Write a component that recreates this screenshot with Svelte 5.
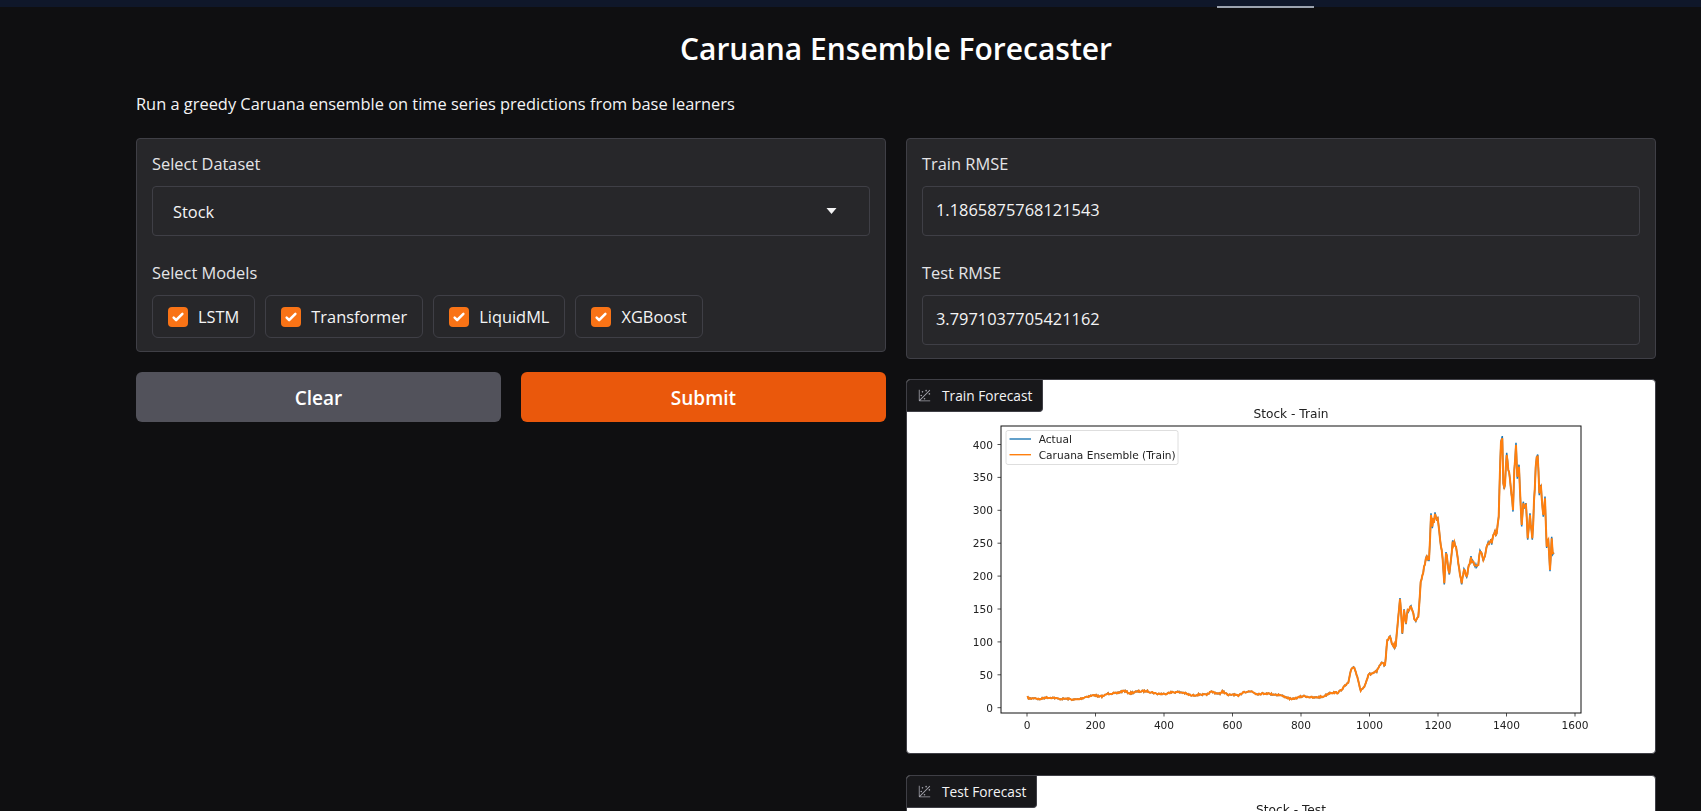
<script>
  let models = $state([
    { name: 'LSTM', on: true },
    { name: 'Transformer', on: true },
    { name: 'LiquidML', on: true },
    { name: 'XGBoost', on: true }
  ]);

  // plot geometry, in the same pixels as the picture of the plot
  const left = 1001, right = 1581, top = 426, bottom = 713;
  const xTicks = [0, 200, 400, 600, 800, 1000, 1200, 1400, 1600];
  const yTicks = [0, 50, 100, 150, 200, 250, 300, 350, 400];
  const xPos = (v) => 1027 + v * 0.3425;
  const yPos = (v) => 707.7 - v * 0.658;

  // traced series, flat part then the run up
  const flat = [[381,982],[390,986],[405,984],[418,988],[435,983],[460,983],[478,987],[500,986],[520,989],[540,987],[560,980],[585,975],[597,980],[610,978],[622,971],[650,970],[672,962],[688,970],[710,965],[740,963],[770,971],[795,972],[805,968],[830,966],[850,968],[875,977],[900,973],[920,975],[932,965],[960,972],[967,963],[985,976],[1000,973],[1015,978],[1030,966],[1055,964],[1070,972],[1100,970]];
  const rise = [[0,882],[30,885],[65,898],[100,888],[130,893],[160,890],[180,878],[205,878],[235,848],[243,810],[253,803],[262,830],[272,872],[285,855],[295,825],[320,815],[333,790],[345,795],[352,720],[360,710],[368,735],[377,738],[385,650],[390,597],[397,700],[402,630],[408,670],[413,630],[423,620],[435,660],[445,650],[452,545],[462,500],[470,470],[477,480],[483,345],[487,380],[495,342],[503,355],[508,395],[515,450],[523,550],[528,460],[538,520],[548,425],[558,440],[565,490],[575,550],[582,510],[590,528],[603,472],[613,495],[625,495],[630,455],[640,480],[652,435],[665,430],[670,405],[680,400],[686,350],[693,125],[697,115],[700,250],[705,255],[710,165],[715,210],[722,260],[729,330],[733,210],[738,135],[742,230],[747,200],[755,375],[760,310],[768,315],[773,415],[780,345],[787,415],[797,200],[803,170],[808,280],[813,260],[820,345],[825,295],[830,440],[835,420],[840,510],[845,415],[848,460],[852,458]];

  const traced = [
    ...flat.map(([x, y]) => [900 + x / 3, 370 + y / 3]),
    ...rise.map(([x, y]) => [1270 + x / 3, 400 + y / 3])
  ];

  // fill the gaps between traced points with daily noise, larger when the price is high
  let seed = 7;
  const rand = () => {
    seed = (seed * 16807) % 2147483647;
    return seed / 2147483647 - 0.5;
  };
  const series = [];
  traced.forEach((p, i) => {
    const next = traced[i + 1];
    series.push(p);
    if (!next) return;
    const steps = Math.floor((next[0] - p[0]) / 0.7);
    for (let s = 1; s < steps; s++) {
      const t = s / steps;
      const y = p[1] + (next[1] - p[1]) * t;
      const amp = 0.8 + (713 - y) * 0.035;
      series.push([p[0] + (next[0] - p[0]) * t, y + rand() * amp]);
    }
  });

  const toLine = (pts) => pts.map((p) => p[0].toFixed(1) + ',' + p[1].toFixed(1)).join(' ');

  // the actual values stick out a bit past the fit at every turn
  const actual = series.map((p, i) => {
    const a = series[i - 1], b = series[i + 1];
    if (!a || !b) return p;
    const out = (713 - p[1]) * 0.008;
    if (p[1] < a[1] && p[1] < b[1]) return [p[0], p[1] - out];
    if (p[1] > a[1] && p[1] > b[1]) return [p[0], p[1] + out];
    return p;
  });
</script>

{#snippet plotIcon()}
  <svg class="plot-icon" viewBox="0 0 32 32">
    <circle cx="20" cy="4" r="2" fill="currentColor"></circle>
    <circle cx="8" cy="16" r="2" fill="currentColor"></circle>
    <circle cx="28" cy="12" r="2" fill="currentColor"></circle>
    <circle cx="11" cy="7" r="2" fill="currentColor"></circle>
    <circle cx="16" cy="24" r="2" fill="currentColor"></circle>
    <path fill="currentColor" d="M30 3.413L28.586 2L4 26.585V2H2v26a2 2 0 0 0 2 2h26v-2H5.413Z"></path>
  </svg>
{/snippet}

{#snippet chart(title, legend, fit, real)}
  <svg class="chart" width="748" height="373" viewBox="907 380 748 373">
    <text class="chart-title" x="1291" y="418" text-anchor="middle">{title}</text>
    {#if real}
      <polyline points={toLine(real)} fill="none" stroke="#1f77b4" stroke-width="1.5"></polyline>
      <polyline points={toLine(fit)} fill="none" stroke="#ff7f0e" stroke-width="2"></polyline>
      <rect x={left} y={top} width={right - left} height={bottom - top} fill="none" stroke="#111" stroke-width="1"></rect>
      {#each xTicks as t}
        <line x1={xPos(t)} x2={xPos(t)} y1={bottom} y2={bottom + 3.5} stroke="#222" stroke-width="0.8"></line>
        <text class="tick" x={xPos(t)} y="729" text-anchor="middle">{t}</text>
      {/each}
      {#each yTicks as t}
        <line x1={left} x2={left - 3.5} y1={yPos(t)} y2={yPos(t)} stroke="#222" stroke-width="0.8"></line>
        <text class="tick" x="993" y={yPos(t) + 4} text-anchor="end">{t}</text>
      {/each}
      <rect x="1006" y="430.5" width="172" height="34" rx="2" fill="#fff" stroke="#d6d6d6" stroke-width="0.8"></rect>
      <line x1="1009.5" x2="1031" y1="439" y2="439" stroke="#1f77b4" stroke-width="1.4"></line>
      <line x1="1009.5" x2="1031" y1="454.7" y2="454.7" stroke="#ff7f0e" stroke-width="1.4"></line>
      <text class="tick" x="1038.7" y="442.6">Actual</text>
      <text class="tick" x="1038.7" y="458.6">{legend}</text>
    {/if}
  </svg>
{/snippet}

<div class="topbar"><span class="tab-line"></span></div>

<main class="page">
  <h1>Caruana Ensemble Forecaster</h1>
  <p class="intro">Run a greedy Caruana ensemble on time series predictions from base learners</p>

  <div class="columns">
    <div class="col">
      <div class="panel left-panel">
        <div class="field">
          <span class="label">Select Dataset</span>
          <div class="select">
            <span>Stock</span>
            <svg class="caret" viewBox="0 0 10 6"><path d="M0 0h10L5 6z" fill="#f4f4f5"></path></svg>
          </div>
        </div>
        <div class="field">
          <span class="label">Select Models</span>
          <div class="checks">
            {#each models as m}
              <label class="check">
                <input type="checkbox" bind:checked={m.on} />
                <span>{m.name}</span>
              </label>
            {/each}
          </div>
        </div>
      </div>
      <div class="actions">
        <button class="btn clear">Clear</button>
        <button class="btn submit">Submit</button>
      </div>
    </div>

    <div class="col">
      <div class="panel right-panel">
        <div class="field">
          <span class="label">Train RMSE</span>
          <div class="output">1.1865875768121543</div>
        </div>
        <div class="field">
          <span class="label">Test RMSE</span>
          <div class="output">3.7971037705421162</div>
        </div>
      </div>

      <div class="plot">
        <div class="plot-label">{@render plotIcon()}<span>Train Forecast</span></div>
        {@render chart('Stock - Train', 'Caruana Ensemble (Train)', series, actual)}
      </div>

      <div class="plot second">
        <div class="plot-label">{@render plotIcon()}<span>Test Forecast</span></div>
        {@render chart('Stock - Test', '', null, null)}
      </div>
    </div>
  </div>
</main>

<style>
  :global(body) {
    background: #0f0f11;
    color: #f4f4f5;
    font-family: "Open Sans", "Noto Sans", sans-serif;
    overflow: hidden;
  }

  .topbar {
    height: 7px;
    background: #0f172a;
    position: relative;
  }

  .tab-line {
    position: absolute;
    left: 1217px;
    top: 6px;
    width: 97px;
    height: 2px;
    background: #9ca3af;
  }

  .page {
    width: 1520px;
    margin-left: 136px;
  }

  h1 {
    margin: 0;
    padding-top: 20px;
    font-size: 30px;
    line-height: 44px;
    font-weight: 600;
    text-align: center;
    color: #fff;
  }

  .intro {
    margin: 0;
    padding-top: 21px;
    font-size: 16.4px;
    line-height: 24px;
    color: #f4f4f5;
  }

  .columns {
    display: grid;
    grid-template-columns: 750px 750px;
    gap: 20px;
    margin-top: 22px;
    align-items: start;
  }

  .col {
    display: flex;
    flex-direction: column;
    gap: 20px;
  }

  .panel {
    background: #27272a;
    border: 1px solid #3f3f46;
    border-radius: 4px;
    padding: 11px 15px 13px;
    display: flex;
    flex-direction: column;
    gap: 23px;
  }

  .field {
    display: flex;
    flex-direction: column;
    gap: 8px;
  }

  .label {
    font-size: 16.4px;
    line-height: 28px;
    color: #e4e4e7;
  }

  .select, .output {
    box-sizing: border-box;
    height: 50px;
    border: 1px solid #3f3f46;
    border-radius: 4px;
    display: flex;
    align-items: center;
    font-size: 16.4px;
  }

  .select {
    padding: 0 32px 0 20px;
    justify-content: space-between;
  }

  .caret {
    width: 11px;
    height: 6px;
  }

  .output {
    padding: 0 13px 3px;
  }

  .checks {
    display: flex;
    gap: 10px;
  }

  .check {
    box-sizing: border-box;
    height: 43px;
    display: flex;
    align-items: center;
    gap: 10px;
    padding: 0 15px;
    border: 1px solid #3f3f46;
    border-radius: 6px;
    font-size: 16.4px;
    color: #f4f4f5;
  }

  .check input {
    appearance: none;
    margin: 0;
    width: 20px;
    height: 20px;
    border-radius: 4px;
    background-color: #3f3f46;
    background-repeat: no-repeat;
    background-position: center;
  }

  .check input:checked {
    background-color: #f97316;
    background-image: url("data:image/svg+xml,%3csvg viewBox='0 0 16 16' fill='white' xmlns='http://www.w3.org/2000/svg'%3e%3cpath d='M12.207 4.793a1 1 0 010 1.414l-5 5a1 1 0 01-1.414 0l-2-2a1 1 0 011.414-1.414L6.5 9.086l4.293-4.293a1 1 0 011.414 0z'/%3e%3c/svg%3e");
  }

  .actions {
    display: grid;
    grid-template-columns: 365px 365px;
    gap: 20px;
  }

  .btn {
    height: 50px;
    padding: 1px 0 0;
    border: 0;
    border-radius: 6px;
    font-family: inherit;
    font-size: 19px;
    font-weight: 600;
    color: #fff;
  }

  .clear {
    background: #52525b;
  }

  .submit {
    background: #ea580c;
  }

  .plot {
    position: relative;
    box-sizing: border-box;
    height: 375px;
    background: #fff;
    border: 1px solid #3f3f46;
    border-radius: 4px;
    overflow: hidden;
  }

  .second {
    margin-top: 1px;
  }

  .plot-label {
    position: absolute;
    left: 0;
    top: 0;
    display: flex;
    align-items: center;
    gap: 11px;
    height: 31px;
    padding: 0 10px 0 11px;
    background: #18181b;
    border-bottom: 1px solid #3f3f46;
    border-right: 1px solid #3f3f46;
    border-bottom-right-radius: 4px;
    font-size: 13.7px;
    color: #f4f4f5;
  }

  .plot-icon {
    width: 13px;
    height: 13px;
    color: #a1a1aa;
  }

  .chart {
    display: block;
    filter: blur(0.3px);
  }

  .chart text {
    font-family: "DejaVu Sans", sans-serif;
    fill: #222;
  }

  .tick {
    font-size: 10.6px;
  }

  .chart-title {
    font-size: 12.2px;
  }
</style>
